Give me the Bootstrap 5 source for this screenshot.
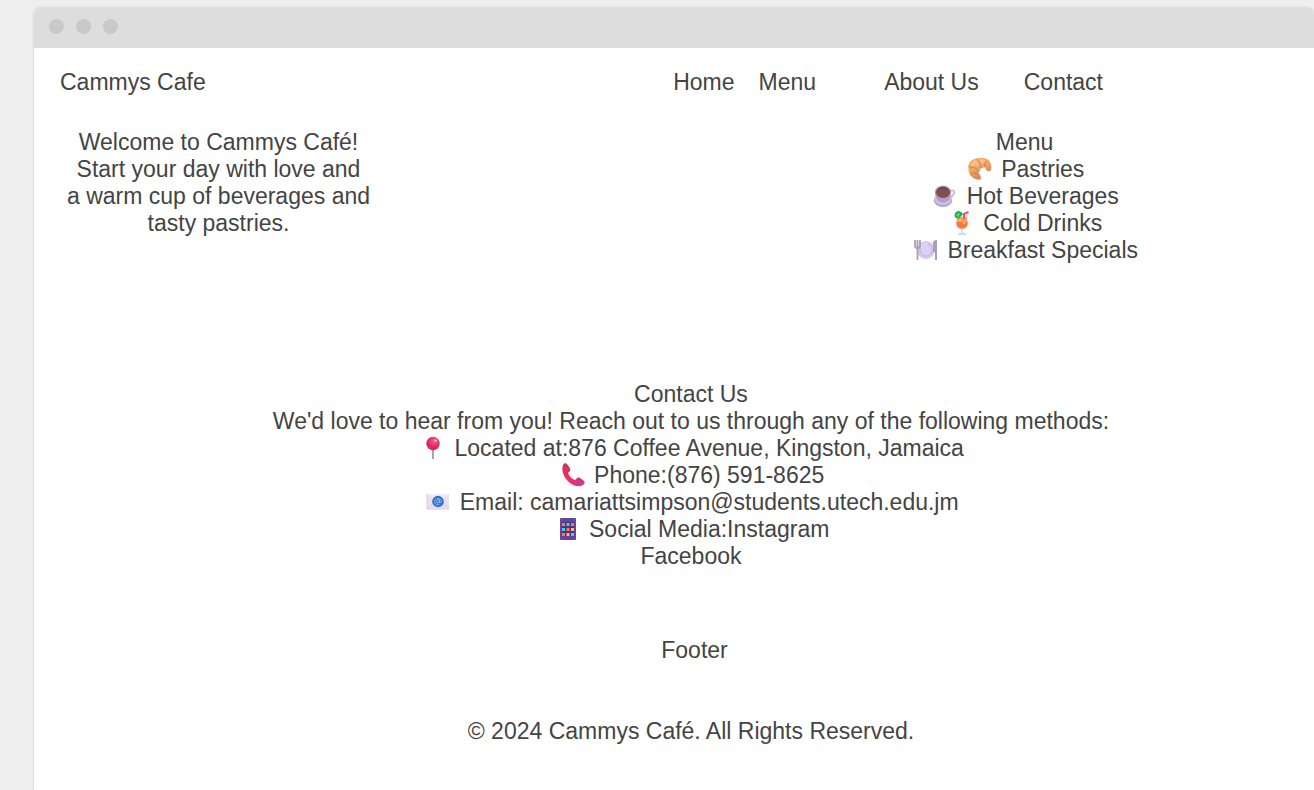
<!DOCTYPE html>
<html lang="en">
<head>
<meta charset="utf-8">
<meta name="viewport" content="width=device-width, initial-scale=1">
<title>Cammys Cafe</title>
<link href="https://cdn.jsdelivr.net/npm/bootstrap@5.3.0/dist/css/bootstrap.min.css" rel="stylesheet">
<style>
body { background: #eee; color: #444; font-family: "Liberation Sans", Arial, sans-serif; font-size: 23px; line-height: 27px; }
h1, h2, p, ul { font-size: 23px; line-height: 27px; font-weight: 400; margin: 0; }
a, a:hover { color: inherit; text-decoration: none; }
.browser { margin: 7px 0 0 34px; min-height: calc(100vh - 7px); background: #fff; border-radius: 6px 6px 0 0; box-shadow: 0 1px 3px rgba(0,0,0,.16); }
.browser-bar { height: 41px; padding: 12px 15px; gap: 12px; background: #ddd; border-radius: 6px 6px 0 0; }
.browser-bar span { width: 15px; height: 15px; border-radius: 50%; background: #c9c9c9; }
.site-head { padding: 21px 211px 0 26px; }
.links { gap: 24px; }
.links .about { margin-left: 44px; margin-right: 21px; }
.intro { padding: 33px 176px 0 33px; }
.contact { padding: 117px 0 0 34px; }
.foot { padding: 67px 0 0 34px; }
.foot h2 { padding-left: 7px; margin-bottom: 54px; }
.emo { width: 24px; height: 24px; margin: 0 3px; vertical-align: -4px; overflow: visible; }
</style>
</head>
<body>
<div class="browser">
  <div class="browser-bar d-flex"><span></span><span></span><span></span></div>
  <header class="site-head d-flex justify-content-between">
    <h1>Cammys Cafe</h1>
    <nav class="links d-flex">
      <a href="#home">Home</a>
      <a href="#menu">Menu</a>
      <a class="about" href="#about">About Us</a>
      <a href="#contact">Contact</a>
    </nav>
  </header>
  <main>
    <div class="intro d-flex justify-content-between text-center">
      <p id="home">Welcome to Cammys Café!<br>Start your day with love and<br>a warm cup of beverages and<br>tasty pastries.</p>
      <section id="menu">
        <h2>Menu</h2>
        <ul class="list-unstyled">
          <li><svg class="emo" viewBox="0 0 24 24" aria-hidden="true">
            <defs><linearGradient id="cr" x1="0" y1="0" x2=".5" y2="1"><stop stop-color="#f2b673"/><stop offset=".5" stop-color="#f0a565"/><stop offset="1" stop-color="#dd8153"/></linearGradient></defs>
            <path fill="url(#cr)" d="M9 1.500C13 0 19 1 21.500 4c2 3 2.500 7 1 9.500-1 1-3 1-4 0l-1.500-3c-2 0-4 .5-5 2 0 1.500-1 2.500-2 3.500 2 1 3 3 3 5.500-.5 1.500-2 1.500-4 1C4 21.500 0 17 .5 12-.5 6 3 2 9 1.500z"/>
            <path fill="#f8c68a" opacity=".7" d="M11 2.500c4-1 8 0 9.500 3-3-1-6 0-7.500 2zM2 10c0-4 3-6 6-7 2 2 3 4 3 6-3-1-6-.5-9 1z"/>
            <path fill="none" stroke="#cc7a4c" stroke-width=".9" d="M8.500 2c3 2 4 5 4.500 9M1 10c4-.5 8 1 10 5M19 3c-2 2-2.500 4-2 7M3 17c3-1.500 5-1.500 8 0"/></svg> Pastries</li>
          <li><svg class="emo" viewBox="0 0 24 24" aria-hidden="true">
            <ellipse cx="10" cy="16.500" rx="9.200" ry="6.500" fill="#b29dcb"/><ellipse cx="10" cy="15.500" rx="8.500" ry="5.800" fill="#cdbde0"/>
            <path d="M17 7c4-2 5 1 3.500 3.500-1 2-2.500 2.500-4.500 2.500" fill="none" stroke="#c8b8de" stroke-width="1.800"/>
            <path d="M2 8c0 6 3 10.500 8 10.500S18 14 18 8z" fill="#b49fcb"/><ellipse cx="10" cy="8" rx="8" ry="6.500" fill="#a793b8"/><ellipse cx="10" cy="8.300" rx="7" ry="5.500" fill="#80504f"/><path d="M4 6q6-6 12 0-6-2-12 0" fill="#63414b"/></svg> Hot Beverages</li>
          <li><svg class="emo" viewBox="0 0 24 24" aria-hidden="true">
            <path d="M12 18v4m-4 1h8" stroke="#c8dfe8" stroke-width="1.800"/>
            <path d="M6 4h12c-1 3 1 5 0 9-1 4-3 6-6 6s-5-2-6-6c-1-4 1-6 0-9z" fill="#d9eaf0"/>
            <path d="M7 6h10c-1 3 1 4.500 0 8-1 5-9 5-10 0-1-3.500 1-5 0-8z" fill="#ff9d56"/><path d="M6.500 11h11v3c-1 4.500-10 4.500-11 0z" fill="#fb7840"/><path d="M9 8h2v2H9zm4 3h2v2h-2z" fill="#ffb95e"/>
            <path d="M4.500 4A4 4 0 0 1 11 1l2 2-4 4.500C6.500 8 4.500 6.500 4.500 4z" fill="#22a653"/><path d="M6 4.500A3 3 0 0 1 10.500 2.500L8.500 6.500z" fill="#65ce62"/>
            <path d="M14 8V3l4.500-2" fill="none" stroke="#f34f78" stroke-width="2"/></svg> Cold Drinks</li>
          <li><svg class="emo" viewBox="0 0 24 24" aria-hidden="true">
            <circle cx="12" cy="12" r="9" fill="#d7c7ee"/><circle cx="12" cy="12" r="6" fill="#d9d0f3" stroke="#c5b5e2"/><path d="M7 10q2-5 7-4" fill="none" stroke="#eee5fa"/>
            <path d="M1 2v6q0 2 2 2h1q2 0 2-2V2M3.500 2v20" fill="none" stroke="#aaa0b5" stroke-width="1.800"/><path d="M19 5q0-3 4-3v20h-2v-8h-2z" fill="#aaa0b5"/></svg> Breakfast Specials</li>
        </ul>
      </section>
    </div>
    <section class="contact text-center" id="contact">
      <h2>Contact Us</h2>
      <p>We'd love to hear from you! Reach out to us through any of the following methods:</p>
      <ul class="list-unstyled">
        <li><svg class="emo" viewBox="0 0 24 24" aria-hidden="true">
          <defs><radialGradient id="pin" cx=".6" cy=".3"><stop stop-color="#ff5e85"/><stop offset="1" stop-color="#db2461"/></radialGradient></defs>
          <path d="M12 11v12" stroke="#aaa0b1" stroke-width="2"/><circle cx="12" cy="7.500" r="6.700" fill="url(#pin)"/><ellipse cx="14.500" cy="4.500" rx="1.500" ry="1" fill="#ffc0d1"/></svg> Located at:876 Coffee Avenue, Kingston, Jamaica</li>
        <li><svg class="emo" viewBox="0 0 24 24" aria-hidden="true">
          <defs><linearGradient id="ph" x1="0" y1="0" x2="1" y2="1"><stop stop-color="#d9325a"/><stop offset=".5" stop-color="#f32b65"/><stop offset="1" stop-color="#c73aad"/></linearGradient></defs>
          <path fill="url(#ph)" d="M2 2c1-2 3-2 4-1l3 5c1 1 0 2-2 4 1 3 4 6 7 7 2-2 3-3 5-2l4 3c1 1 1 3-1 4-3 2-8 2-13-2C3 15 0 8 2 2z"/><path d="M3 3c1-2 2-2 3-1l3 4-2 2M16 16c2-2 3 0 6 2" fill="none" stroke="#a54069"/></svg> Phone:(876) 591-8625</li>
        <li><svg class="emo" viewBox="0 0 24 24" aria-hidden="true">
          <path d="M1 4h22v15H1z" fill="#e8dff2"/><path d="M1 4h22L12 13z" fill="#f2eafa"/><path d="m1 19 8-8m14 8-8-8" stroke="#dcc9e5"/><path d="M1 4v15M1 19h22" fill="none" stroke="#e6c6dc"/>
          <circle cx="12" cy="11.500" r="5.800" fill="#2d72cd"/><circle cx="12" cy="11.500" r="1.500" fill="none" stroke="#a9ccf6" stroke-width=".8"/><path d="M13.500 9.500v3q2 1 2-1c0-4-7-4-7 0 0 3 3 4 5 3" fill="none" stroke="#a9ccf6" stroke-width=".7"/></svg> Email: camariattsimpson@students.utech.edu.jm</li>
        <li><svg class="emo" viewBox="0 0 24 24" aria-hidden="true">
          <rect x="4" y="1" width="16" height="22" rx="1" fill="#69409e"/><path d="M5 2h14v3H5z" fill="#4e5399"/><path d="M6 5h12v14H6z" fill="#493588"/>
          <path d="M6 6h3v3H6zm9 0h3v3h-3zM10.500 11h3v3h-3zM6 16h3v3H6z" fill="#ff783f"/><path d="M10.500 6h3v3h-3zM6 11h3v3H6zm9 5h3v3h-3z" fill="#47c7ed"/><path d="M15 11h3v3h-3zM10.500 16h3v3h-3z" fill="#ffc13c"/></svg> Social Media:<a href="#instagram">Instagram</a></li>
        <li><a href="#facebook">Facebook</a></li>
      </ul>
    </section>
  </main>
  <footer class="foot text-center">
    <h2>Footer</h2>
    <p>© 2024 Cammys Café. All Rights Reserved.</p>
  </footer>
</div>
<script src="https://cdn.jsdelivr.net/npm/bootstrap@5.3.0/dist/js/bootstrap.bundle.min.js"></script>
</body>
</html>
